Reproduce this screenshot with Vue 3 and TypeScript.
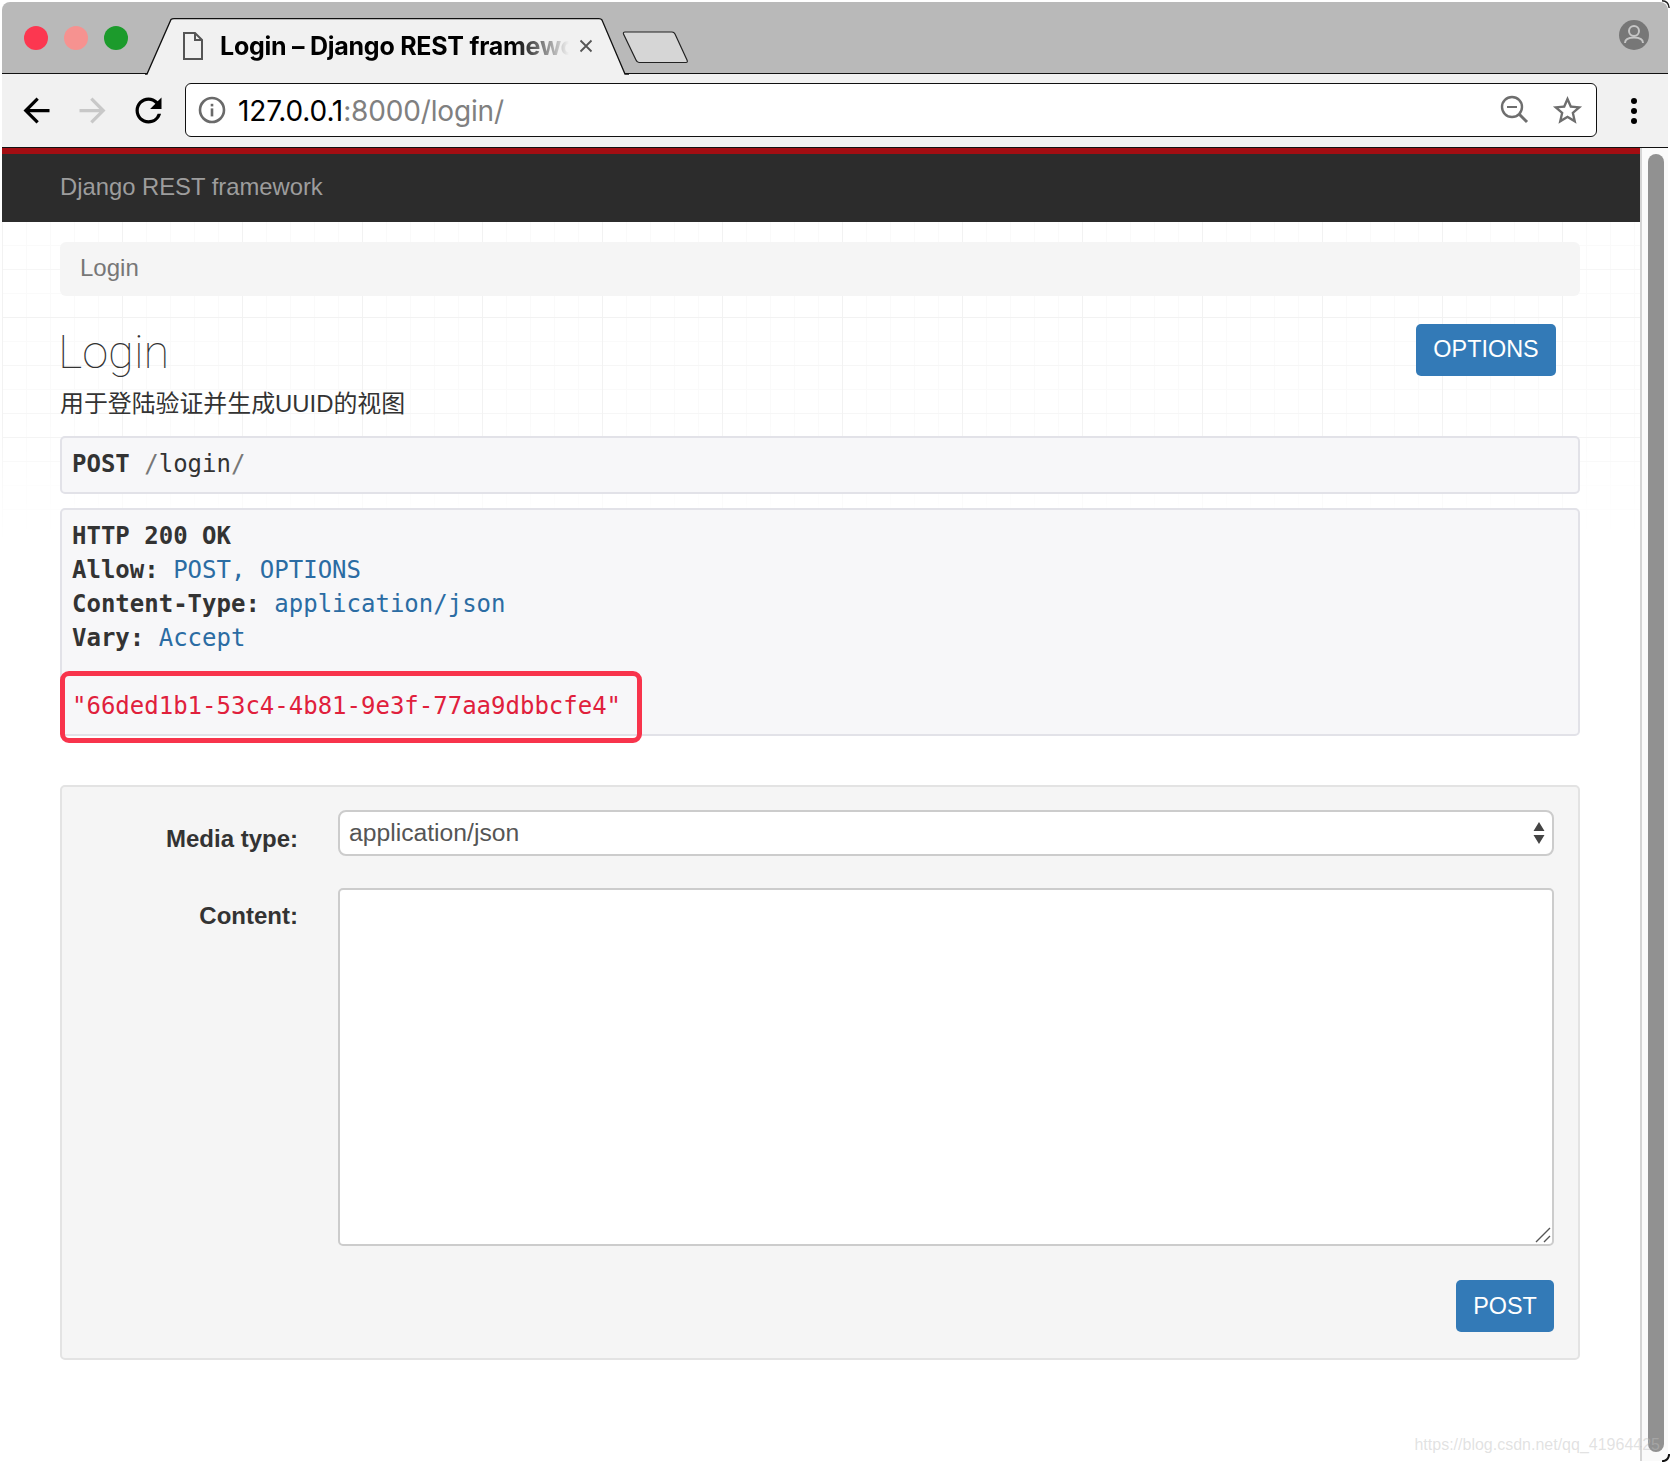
<script setup lang="ts">
const lights: string[] = ['#fc3750', '#f69290', '#1c9b2c']
</script>

<template>
  <div class="screen">
    <div class="window">
      <header class="tabbar">
        <div class="lights">
          <span v-for="c in lights" :key="c" class="light" :style="{ background: c }"></span>
        </div>
        <div class="tab">
          <svg class="tab-shape" width="484" height="57" viewBox="0 0 484 57">
            <path d="M0 56 H2 L26 1.5 Q27 .7 29 .7 H454 Q456 .7 457 2 L480 56 H484" fill="#f1f1f1" stroke="#111" stroke-width="1.3" />
          </svg>
          <svg class="doc" width="22" height="30" viewBox="0 0 22 30">
            <path d="M2 2 H13 L20 9 V28 H2 Z M13 2 V9 H20" fill="none" stroke="#555" stroke-width="2" />
          </svg>
          <span class="tab-title">Login – Django REST framework</span>
          <svg class="close" width="14" height="14" viewBox="0 0 14 14">
            <path d="M1.5 1.5 L12.5 12.5 M12.5 1.5 L1.5 12.5" stroke="#555" stroke-width="1.8" />
          </svg>
        </div>
        <svg class="newtab" width="68" height="33" viewBox="0 0 68 33">
          <path d="M1.5 3 Q1 1 3 1 H50 Q52 1 53 3 L65 29 Q66 31.5 64 31.5 H17 Q15 31.5 14 29 Z" fill="#d6d6d6" stroke="#222" stroke-width="1.2" />
        </svg>
        <svg class="avatar" width="30" height="30" viewBox="0 0 30 30">
          <circle cx="15" cy="15" r="15" fill="#777" />
          <circle cx="15" cy="11" r="5" fill="#777" stroke="#c6c6c6" stroke-width="2" />
          <path d="M6 23 C6 18.5 11 17.5 15 17.5 C19 17.5 24 18.5 24 23" fill="none" stroke="#c6c6c6" stroke-width="2" />
        </svg>
      </header>

      <div class="toolbar">
        <svg class="nav" width="39" height="39" viewBox="0 0 24 24">
          <path d="M20 11H7.83l5.59-5.59L12 4l-8 8 8 8 1.41-1.41L7.83 13H20v-2z" fill="#000" />
        </svg>
        <svg class="nav" width="39" height="39" viewBox="0 0 24 24">
          <path d="M4 11h12.17l-5.59-5.59L12 4l8 8-8 8-1.41-1.41L16.17 13H4v-2z" fill="#c8c8c8" />
        </svg>
        <svg class="nav" width="39" height="39" viewBox="0 0 24 24">
          <path d="M17.65 6.35A7.958 7.958 0 0012 4c-4.42 0-7.99 3.58-7.99 8s3.57 8 7.99 8c3.73 0 6.84-2.55 7.73-6h-2.08A5.99 5.99 0 0112 18c-3.31 0-6-2.69-6-6s2.69-6 6-6c1.66 0 3.14.69 4.22 1.78L13 11h7V4l-2.35 2.35z" fill="#000" />
        </svg>
        <div class="urlbox">
          <svg class="info" width="28" height="28" viewBox="0 0 28 28">
            <circle cx="14" cy="14" r="12" fill="none" stroke="#6a6a6a" stroke-width="2.6" />
            <rect x="12.7" y="12.4" width="2.6" height="8" fill="#6a6a6a" />
            <rect x="12.7" y="7.8" width="2.6" height="2.6" fill="#6a6a6a" />
          </svg>
          <span class="url"><span class="url-host">127.0.0.1</span><span class="url-rest">:8000/login/</span></span>
          <svg class="zoom" width="30" height="30" viewBox="0 0 30 30">
            <circle cx="12" cy="12" r="10" fill="none" stroke="#6e6e6e" stroke-width="2.4" />
            <path d="M7 12 H17" stroke="#6e6e6e" stroke-width="2" />
            <path d="M19 19 L27 27" stroke="#6e6e6e" stroke-width="3" />
          </svg>
          <svg class="star" width="35" height="35" viewBox="0 0 24 24">
            <path d="M22 9.24l-7.19-.62L12 2 9.19 8.63 2 9.24l5.46 4.73L5.82 21 12 17.27 18.18 21l-1.63-7.03L22 9.24zM12 15.4l-3.76 2.27 1-4.28-3.32-2.88 4.38-.38L12 6.1l1.71 4.04 4.38.38-3.32 2.88 1 4.28L12 15.4z" fill="#6e6e6e" />
          </svg>
        </div>
        <div class="dots"><i></i><i></i><i></i></div>
      </div>

      <div class="viewport">
        <div class="page">
          <div class="redbar"></div>
          <nav class="navbar"><a class="brand">Django REST framework</a></nav>
          <main class="container">
            <div class="grid-bg"></div>
            <div class="breadcrumb">Login</div>
            <div class="head">
              <div>
                <h1 class="title">Login</h1>
                <p class="desc">用于登陆验证并生成UUID的视图</p>
              </div>
              <button class="btn options">OPTIONS</button>
            </div>
            <pre class="code request"><b>POST</b> <span class="slash">/</span>login<span class="slash">/</span></pre>
            <div class="code response">
              <div class="line"><b>HTTP 200 OK</b></div>
              <div class="line"><b>Allow:</b> <span class="lit">POST, OPTIONS</span></div>
              <div class="line"><b>Content-Type:</b> <span class="lit">application/json</span></div>
              <div class="line"><b>Vary:</b> <span class="lit">Accept</span></div>
              <div class="line">&nbsp;</div>
              <div class="line str">"66ded1b1-53c4-4b81-9e3f-77aa9dbbcfe4"</div>
              <div class="highlight"></div>
            </div>
            <form class="well" @submit.prevent>
              <label class="label label-media">Media type:</label>
              <div class="select">
                <span>application/json</span>
                <svg class="carets" width="12" height="24" viewBox="0 0 12 24">
                  <path d="M6 1 L11.5 10 H.5 Z M.5 14 H11.5 L6 23 Z" fill="#444" />
                </svg>
              </div>
              <label class="label label-content">Content:</label>
              <div class="textarea">
                <svg class="grip" width="16" height="16" viewBox="0 0 16 16">
                  <path d="M1 15 L15 1 M9 15 L15 9" stroke="#555" stroke-width="1.4" />
                </svg>
              </div>
              <div class="actions"><button class="btn post">POST</button></div>
            </form>
          </main>
        </div>
        <aside class="scrollbar"><div class="thumb"></div></aside>
      </div>
      <div class="watermark">https://blog.csdn.net/qq_41964425</div>
    </div>
    <svg class="corner corner-tr" width="8" height="8" viewBox="0 0 8 8">
      <path d="M0 .8 Q6.5 .8 7.2 8" fill="none" stroke="#222" stroke-width="1.4" />
    </svg>
    <svg class="corner corner-br" width="8" height="8" viewBox="0 0 8 8">
      <path d="M7.2 0 Q6.5 7 0 7.2" fill="none" stroke="#111" stroke-width="2" />
    </svg>
  </div>
</template>

<style>
html, body { margin: 0; background: #fff; overflow: hidden; }
</style>

<style scoped>
.screen { position: relative; width: 1670px; height: 1462px; overflow: hidden; }
.corner { position: absolute; right: 0; }
.corner-tr { top: 0; }
.corner-br { bottom: 0; }
.window {
  position: relative;
  width: 1666px;
  height: 1460px;
  margin: 2px 2px 0;
  overflow: hidden;
  border-radius: 8px;
  font-family: "Liberation Sans", Arial, sans-serif;
  background: #fff;
}
.tabbar {
  display: flex;
  align-items: flex-end;
  height: 71px;
  background: #b9b9b9;
  border-bottom: 1px solid #111;
  box-sizing: content-box;
  position: relative;
}
.lights {
  display: flex;
  gap: 16px;
  margin: 0 0 23px 22px;
}
.light { width: 24px; height: 24px; border-radius: 50%; display: block; }
.tab {
  position: relative;
  display: flex;
  align-items: center;
  width: 484px;
  height: 56px;
  margin: 0 0 -1px 17px;
  flex: none;
}
.tab-shape { position: absolute; left: 0; top: 0; }
.doc { position: relative; margin: 0 0 0 37px; flex: none; }
.tab-title {
  position: relative;
  margin: 0 0 0 16px;
  width: 349px;
  flex: none;
  overflow: hidden;
  white-space: nowrap;
  font: 700 25px Inter, "Liberation Sans", sans-serif;
  letter-spacing: -.25px;
  color: #000;
  -webkit-mask-image: linear-gradient(90deg, #000 84%, transparent 100%);
  mask-image: linear-gradient(90deg, #000 84%, transparent 100%);
}
.close { position: relative; margin-left: 10px; flex: none; }
.newtab { margin: 0 0 9px -7px; flex: none; }
.avatar { margin: 0 19px 23px auto; flex: none; }

.toolbar {
  display: flex;
  align-items: center;
  gap: 17px;
  height: 73px;
  padding-left: 15px;
  background: #f1f1f1;
  border-bottom: 1px solid #111;
}
.nav { flex: none; }
.urlbox {
  display: flex;
  align-items: center;
  box-sizing: border-box;
  width: 1412px;
  height: 54px;
  margin-top: -1px;
  padding: 0 11px 0 12px;
  background: #fff;
  border: 1.5px solid #111;
  border-radius: 6px;
  flex: none;
}
.info { flex: none; }
.url {
  margin: 2px 0 0 12px;
  font: 400 28px Inter, "Liberation Sans", sans-serif;
  letter-spacing: -.15px;
}
.url-host { color: #000; }
.url-rest { color: #808080; }
.zoom { margin-left: auto; flex: none; }
.star { margin-left: 20px; flex: none; }
.dots {
  display: flex;
  flex-direction: column;
  gap: 4px;
  margin-left: 17px;
}
.dots i { display: block; width: 6px; height: 6px; background: #000; border-radius: 50%; }

.viewport {
  display: flex;
  height: 1313px;
}
.page {
  width: 1638px;
  flex: none;
}
.redbar { height: 6px; background: #a30d12; }
.navbar {
  height: 68px;
  display: flex;
  align-items: center;
  padding: 0 0 3px 58px;
  box-sizing: border-box;
  background: #2c2c2c;
}
.brand { font-size: 23.8px; color: #9d9d9d; }
.container {
  position: relative;
  padding: 20px 60px 0 58px;
  width: 1638px;
  box-sizing: border-box;
  height: 1239px;
}
.grid-bg {
  position: absolute;
  inset: 0 0 auto 0;
  height: 320px;
  background-image:
    linear-gradient(#f2f2f2 1px, transparent 1px),
    linear-gradient(90deg, #f2f2f2 1px, transparent 1px),
    linear-gradient(#f6f6f6 1px, transparent 1px),
    linear-gradient(#fafafa 1px, transparent 1px),
    linear-gradient(90deg, #fafafa 1px, transparent 1px);
  background-size: 120px 120px, 120px 120px, 48px 48px, 24px 24px, 24px 24px;
  background-position: 0 95px, 0 0, 0 47px, 0 23px, 0 0;
  -webkit-mask-image: linear-gradient(#000 60%, transparent);
  mask-image: linear-gradient(#000 60%, transparent);
}
.breadcrumb {
  position: relative;
  height: 54px;
  line-height: 52px;
  padding-left: 20px;
  background: #f5f5f5;
  border-radius: 6px;
  color: #777;
  font-size: 24px;
}
.head {
  position: relative;
  display: flex;
  justify-content: space-between;
  align-items: flex-start;
  padding: 26px 24px 0 0;
}
.title {
  margin: 0 0 0 -2px;
  font: 100 47px/60px Roboto, "Liberation Sans", sans-serif;
  color: #333;
}
.desc {
  margin: 5px 0 0;
  font: 23.9px/34px "Liberation Sans", "Noto Sans CJK SC", sans-serif;
  color: #333;
}
.head .options { margin-top: 2px; padding-bottom: 2px; }
.btn {
  border: 0;
  background: #337ab7;
  color: #fff;
  font: 23.4px "Liberation Sans", sans-serif;
  border-radius: 5px;
  padding: 0;
}
.options { width: 140px; height: 52px; }
.code {
  position: relative;
  margin: 0;
  box-sizing: border-box;
  font: 24px/34px "DejaVu Sans Mono", monospace;
  color: #333;
  background: #f7f7f9;
  border: 2px solid #e2e2e8;
  border-radius: 5px;
}
.request {
  height: 58px;
  margin-top: 15px;
  padding: 9px 10px;
}
.slash { color: #777; }
.response {
  height: 228px;
  margin-top: 14px;
  padding: 9px 10px 0;
}
.line { white-space: pre; }
.lit { color: #2b6ca3; }
.str { color: #e0203c; }
.highlight {
  position: absolute;
  left: -2px;
  top: 161px;
  width: 582px;
  height: 72px;
  box-sizing: border-box;
  border: 5px solid #f8344c;
  border-radius: 9px;
}
.well {
  display: grid;
  grid-template-columns: 236px 1216px;
  column-gap: 40px;
  box-sizing: border-box;
  height: 575px;
  margin-top: 49px;
  padding: 23px 0 0 0;
  background: #f5f5f5;
  border: 2px solid #e3e3e3;
  border-radius: 5px;
  grid-template-rows: 46px 358px 52px;
  row-gap: 32px;
}
.label {
  text-align: right;
  font-size: 24px;
  font-weight: 700;
  color: #333;
}
.label-media { padding-top: 15px; }
.label-content { padding-top: 14px; }
.select {
  position: relative;
  box-sizing: border-box;
  display: flex;
  align-items: center;
  padding: 0 7px 1px 9px;
  background: #fff;
  border: 2px solid #ccc;
  border-radius: 8px;
  font-size: 24.7px;
  color: #555;
}
.carets { margin-left: auto; }
.textarea {
  position: relative;
  box-sizing: border-box;
  background: #fff;
  border: 2px solid #ccc;
  border-radius: 5px;
}
.grip { position: absolute; right: 1px; bottom: 1px; }
.actions {
  grid-column: 2;
  display: flex;
  justify-content: flex-end;
  margin-top: 2px;
}
.post { width: 98px; height: 52px; }
.scrollbar {
  flex: 1;
  border-left: 2px solid #d4d4d4;
  background: #fafafa;
  padding: 6px 4px 0 6px;
  box-sizing: border-box;
}
.thumb {
  width: 16px;
  height: 1298px;
  background: #919191;
  border-radius: 8px;
}
.watermark {
  position: absolute;
  right: 8px;
  bottom: 8px;
  font-size: 16px;
  color: rgba(190, 190, 190, .45);
}
</style>
